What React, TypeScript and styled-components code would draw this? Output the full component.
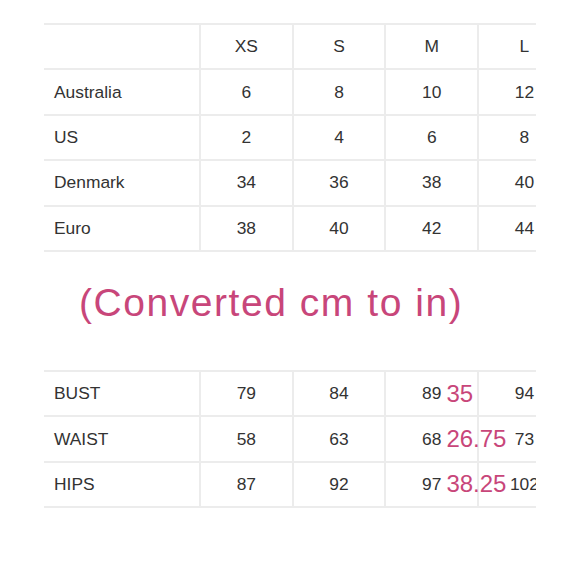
import React from "react";
import styled, { createGlobalStyle } from "styled-components";

const Global = createGlobalStyle`
  html, body { margin: 0; padding: 0; background: #ffffff; }
  body { font-family: "Liberation Sans", Arial, sans-serif; }
`;

const Page = styled.div`
  width: 580px;
  height: 580px;
  box-sizing: border-box;
  padding: 23px 0 0 44px;
  background: #ffffff;
`;

const TableClip = styled.div`
  width: 492px;
  overflow: hidden;
  border-top: 2px solid #ececec;
`;

const Row = styled.div`
  display: grid;
  grid-template-columns: 155px repeat(4, 92.7px);
  width: 526px;
  height: 45.4px;
  box-sizing: border-box;
  border-bottom: 2px solid #ececec;
`;

const Cell = styled.div<{ $label?: boolean }>`
  position: relative;
  display: flex;
  align-items: center;
  justify-content: ${(p) => (p.$label ? "flex-start" : "center")};
  padding-left: ${(p) => (p.$label ? "10px" : "0")};
  border-left: ${(p) => (p.$label ? "none" : "2px solid #ececec")};
  font-size: 17.4px;
  color: #333333;
  white-space: nowrap;
`;

const Note = styled.span`
  position: absolute;
  left: 60px;
  top: 50%;
  transform: translateY(-50%);
  font-size: 24px;
  line-height: 1;
  color: #c8467a;
  z-index: 1;
`;

const Title = styled.div`
  margin: 31px 0 48px 35px;
  font-size: 39px;
  line-height: 39px;
  letter-spacing: 1.55px;
  color: #c8467a;
  white-space: nowrap;
`;

type R = { label: string; values: string[]; note?: string };

const sizes: R[] = [
  { label: "", values: ["XS", "S", "M", "L"] },
  { label: "Australia", values: ["6", "8", "10", "12"] },
  { label: "US", values: ["2", "4", "6", "8"] },
  { label: "Denmark", values: ["34", "36", "38", "40"] },
  { label: "Euro", values: ["38", "40", "42", "44"] },
];

const measures: R[] = [
  { label: "BUST", values: ["79", "84", "89", "94"], note: "35" },
  { label: "WAIST", values: ["58", "63", "68", "73"], note: "26.75" },
  { label: "HIPS", values: ["87", "92", "97", "102"], note: "38.25" },
];

function Table({ rows }: { rows: R[] }) {
  return (
    <TableClip>
      {rows.map((r, i) => (
        <Row key={i}>
          <Cell $label>{r.label}</Cell>
          {r.values.map((v, j) => (
            <Cell key={j}>
              {v}
              {j === 2 && r.note ? <Note>{r.note}</Note> : null}
            </Cell>
          ))}
        </Row>
      ))}
    </TableClip>
  );
}

export default function App() {
  return (
    <>
      <Global />
      <Page>
        <Table rows={sizes} />
        <Title>(Converted cm to in)</Title>
        <Table rows={measures} />
      </Page>
    </>
  );
}
